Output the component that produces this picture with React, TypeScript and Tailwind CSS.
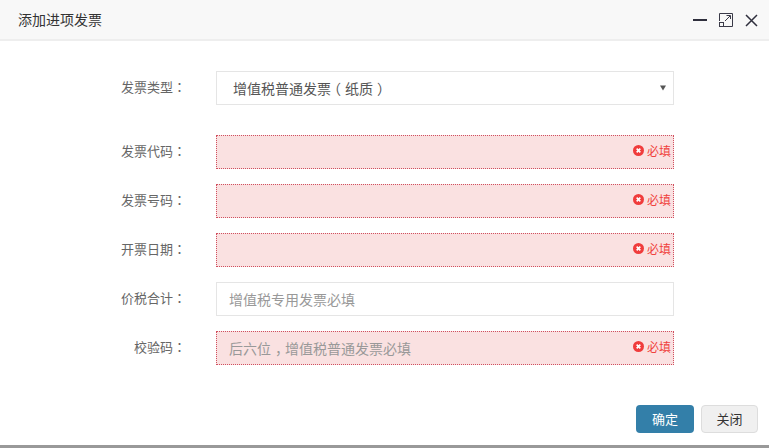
import * as React from "react";

const fontStack = "font-['Noto_Sans_CJK_SC','Liberation_Sans',sans-serif]";

function Colon() {
    return <span className="font-['Noto_Sans_CJK_JP',sans-serif]">：</span>;
}

interface RowProps {
    label: string;
    placeholder?: React.ReactNode;
    invalid?: boolean;
}

function FieldRow({ label, placeholder, invalid }: RowProps) {
    return (
        <div className="flex h-[34px] items-center">
            <div className="w-[186px] shrink-0 pb-[2px] text-right text-[13px] text-[#666]">
                {label}
                <Colon />
            </div>
            <div
                className={
                    invalid
                        ? "ml-[30px] flex h-[34px] w-[458px] items-center justify-between border border-dotted border-[#d0505f] bg-[#fae1e1] pl-3 pr-[2px]"
                        : "ml-[30px] flex h-[34px] w-[458px] items-center justify-between border border-[#e5e5e5] bg-white pl-3 pr-[2px]"
                }
            >
                <span className="pb-[1px] text-sm text-[#999]">{placeholder}</span>
                {invalid && (
                    <span className="flex items-center gap-[3px] pb-[3px] text-xs text-[#f0423c]">
                        <svg width="11" height="11" viewBox="0 0 12 12">
                            <circle cx="6" cy="6" r="6" fill="#f03c3c" />
                            <path d="M4 4l4 4M8 4l-4 4" stroke="#fff" strokeWidth="1.8" />
                        </svg>
                        必填
                    </span>
                )}
            </div>
        </div>
    );
}

export default function App() {
    return (
        <div className={`flex h-[448px] w-[769px] flex-col overflow-hidden bg-white ${fontStack}`}>
            <div className="flex h-[41px] shrink-0 items-center justify-between border-b-2 border-[#eee] bg-[#f8f8f8] pl-[18px] pr-[11px]">
                <span className="pb-[1px] text-sm text-[#333]">添加进项发票</span>
                <div className="flex items-center gap-3 pt-[1px]">
                    <svg width="14" height="14" viewBox="0 0 14 14">
                        <path d="M0 7h14" stroke="#2f2f3d" strokeWidth="2" />
                    </svg>
                    <svg width="14" height="14" viewBox="0 0 14 14" fill="none" stroke="#3a3a48">
                        <path d="M.5 8V.5h13v13H5" />
                        <rect x=".5" y="9.5" width="4" height="4" />
                        <path d="M6 8l5-5M7.5 2.5h4V6" />
                    </svg>
                    <svg width="13" height="13" viewBox="0 0 13 13">
                        <path d="M1 1l11 11M12 1L1 12" stroke="#2f2f3d" strokeWidth="1.5" />
                    </svg>
                </div>
            </div>

            <div className="flex flex-col pt-[30px]">
                <div className="mb-[30px] flex h-[34px] items-center">
                    <div className="w-[186px] shrink-0 pb-[2px] text-right text-[13px] text-[#666]">
                        发票类型
                        <Colon />
                    </div>
                    <div className="ml-[30px] flex h-[34px] w-[458px] items-center justify-between border border-[#e5e5e5] bg-white pl-4 pr-[7px]">
                        <span className="pb-[1px] text-sm text-[#555]">
                            增值税普通发<span className="tracking-[-4px]">票</span>
                            <span className="tracking-[4px]">（</span>纸<span className="tracking-[4px]">质</span>）
                        </span>
                        <svg width="6" height="6" viewBox="0 0 6 6">
                            <path d="M0 .5h6L3 5.5z" fill="#555" />
                        </svg>
                    </div>
                </div>
                <div className="flex flex-col gap-[15px]">
                    <FieldRow label="发票代码" invalid />
                    <FieldRow label="发票号码" invalid />
                    <FieldRow label="开票日期" invalid />
                    <FieldRow label="价税合计" placeholder="增值税专用发票必填" />
                    <FieldRow
                        label="校验码"
                        placeholder={
                            <>
                                后六<span className="tracking-[4px]">位</span>
                                <span className="tracking-[-4px]">，</span>增值税普通发票必填
                            </>
                        }
                        invalid
                    />
                </div>
            </div>

            <div className="flex justify-end gap-[7px] pr-[11px] pt-[40px]">
                <button className="h-7 w-[58px] rounded-sm bg-[#337fa9] pb-[1px] text-[13px] text-white">确定</button>
                <button className="h-7 w-[57px] rounded-sm border border-[#ddd] bg-[#f0f0f0] pb-[1px] text-[13px] text-[#333]">关闭</button>
            </div>
            <div className="mt-auto h-[3px] bg-[#999]" />
        </div>
    );
}
